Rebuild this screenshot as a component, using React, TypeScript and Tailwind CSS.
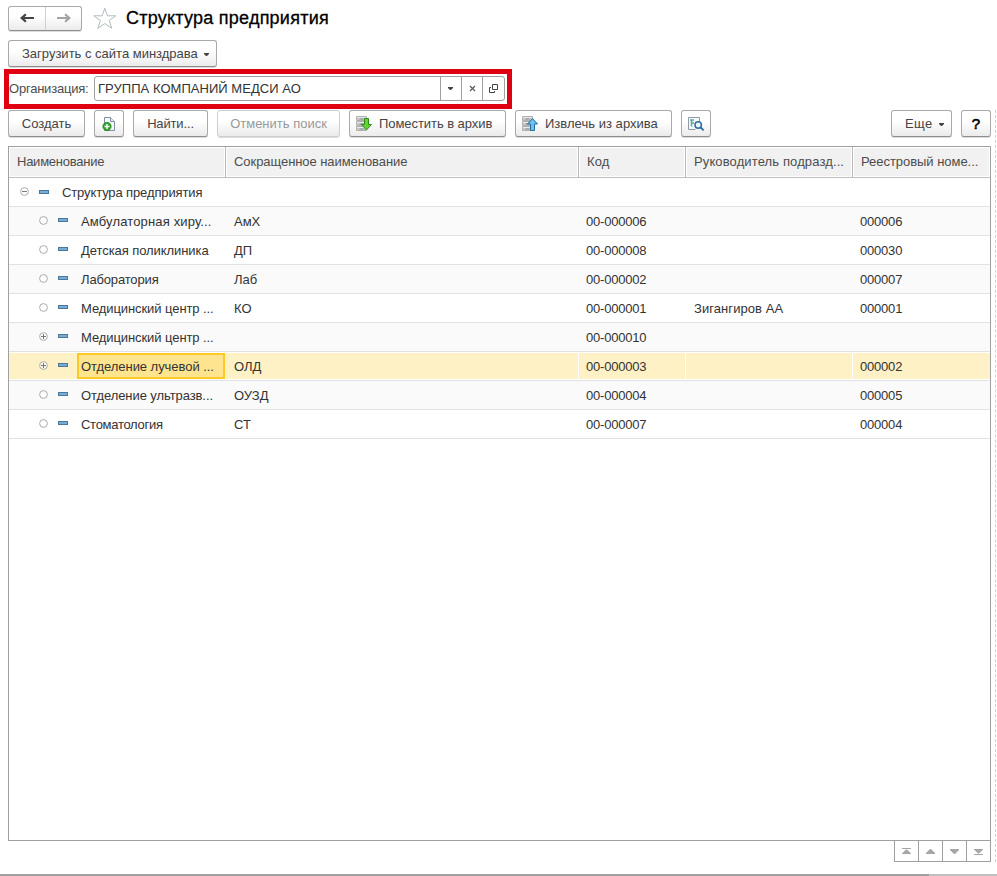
import type { ReactNode } from "react";

type Row = {
  name: string;
  nameTracking: string;
  short: string;
  code: string;
  head?: string;
  reg: string;
  expandable?: boolean;
  selected?: boolean;
};

const rows: Row[] = [
  { name: "Амбулаторная хиру...", nameTracking: "tracking-[0.15px]", short: "АмХ", code: "00-000006", reg: "000006" },
  { name: "Детская поликлиника", nameTracking: "tracking-[-0.07px]", short: "ДП", code: "00-000008", reg: "000030" },
  { name: "Лаборатория", nameTracking: "tracking-[-0.15px]", short: "Лаб", code: "00-000002", reg: "000007" },
  { name: "Медицинский центр ...", nameTracking: "tracking-[-0.08px]", short: "КО", code: "00-000001", head: "Зигангиров АА", reg: "000001" },
  { name: "Медицинский центр ...", nameTracking: "tracking-[-0.08px]", short: "", code: "00-000010", reg: "", expandable: true },
  { name: "Отделение лучевой ...", nameTracking: "tracking-[-0.05px]", short: "ОЛД", code: "00-000003", reg: "000002", expandable: true, selected: true },
  { name: "Отделение ультразв...", nameTracking: "tracking-[-0.08px]", short: "ОУЗД", code: "00-000004", reg: "000005" },
  { name: "Стоматология", nameTracking: "tracking-[-0.28px]", short: "СТ", code: "00-000007", reg: "000004" },
];

const gridCols = "grid grid-cols-[217px_353px_107px_167px_137px]";

function Button({ className, children }: { className: string; children: ReactNode }) {
  return (
    <button
      className={
        "flex h-[27px] shrink-0 items-center whitespace-nowrap rounded-[3px] border border-[#a9a9a9] border-b-[#8e8e8e] bg-linear-to-b from-white from-40% to-[#ebebeb] text-[#444] shadow-[0_1px_0_#dcdcdc] " +
        className
      }
    >
      {children}
    </button>
  );
}

function Caret({ className = "" }: { className?: string }) {
  return (
    <svg width="5" height="3" viewBox="0 0 5 3" className={"shrink-0 " + className}>
      <path d="M0 0h5v1L3 3H2L0 1z" fill="#444" />
    </svg>
  );
}

function Arrow({ color, flip }: { color: string; flip?: boolean }) {
  return (
    <svg width="14" height="10" viewBox="0 0 14 10" className={"mb-px " + (flip ? "-scale-x-100" : "")}>
      <path d="M0 5 5.2.6 6.6 2 4.6 4H14V6.1H4.6L6.6 8.1 5.2 9.5z" fill={color} />
    </svg>
  );
}

function Node({ kind }: { kind: "leaf" | "plus" | "minus" }) {
  return (
    <svg width="9" height="9" viewBox="0 0 9 9" className="shrink-0">
      <circle cx="4.5" cy="4.5" r="3.9" fill="#fff" fillOpacity=".6" stroke="#aaa" strokeWidth="1" />
      {kind !== "leaf" && <path d="M2 4.5h5" stroke="#777" />}
      {kind === "plus" && <path d="M4.5 2v5" stroke="#777" />}
    </svg>
  );
}

function Dash() {
  return <span className="h-[4px] w-[10px] shrink-0 border border-[#4a7899] bg-[#79abd4]" />;
}

function Cabinet({ children }: { children: ReactNode }) {
  return (
    <svg width="17" height="16" viewBox="0 0 17 16" className="shrink-0">
      {[0, 5, 10].map((y) => (
        <g key={y}>
          <path d={`M.5 ${y + 0.5}h10v4h-10z`} fill="#c9c9c9" stroke="#b0b0b0" />
          <path d={`M1 ${y + 1}h9v1H1z`} fill="#e9e9e9" />
          <path d={`M3.5 ${y + 3}h4`} stroke="#8c8c8c" />
        </g>
      ))}
      {children}
    </svg>
  );
}

function HeadCell({ tracking, last, children }: { tracking: string; last?: boolean; children: string }) {
  return (
    <div className={"flex border-[#b9b9b9] p-px " + (last ? "" : "border-r")}>
      <div className={"flex flex-1 items-center overflow-hidden whitespace-nowrap bg-[#f1f1f1] pl-[7px] text-[#4d4d4d] " + tracking}>
        {children}
      </div>
    </div>
  );
}

function ScrollButton({ up, bar }: { up?: boolean; bar?: boolean }) {
  return (
    <button className="flex h-full w-6 items-center justify-center border-r border-[#a0a0a0]">
      <svg width="9" height="7" viewBox="0 0 9 7" className={up ? "" : "-scale-y-100"}>
        {bar && <path d="M0 .5h9" stroke="#a6a6a6" />}
        <path d={bar ? "M4 1.5h1l4 4v.5H0v-.5z" : "M4 1h1l4 4v1H0V5z"} fill="#a6a6a6" />
      </svg>
    </button>
  );
}

export default function App() {
  return (
    <div className="flex h-[876px] w-[997px] flex-col overflow-hidden bg-white font-['Liberation_Sans',Arial,sans-serif] text-[13px] leading-4">
      <header className="flex h-[34px] items-center pl-2 pt-[3px]">
        <div className="flex h-[25px] w-[74px] rounded-[3px] border border-[#a9a9a9] border-b-[#8e8e8e] bg-linear-to-b from-white from-40% to-[#ebebeb] shadow-[0_1px_0_#dcdcdc]">
          <button className="flex w-[37px] items-center justify-center border-r border-[#cfcfcf]">
            <Arrow color="#444" />
          </button>
          <button className="flex flex-1 items-center justify-center">
            <Arrow color="#a3a3a3" flip />
          </button>
        </div>
        <svg width="24" height="23" viewBox="0 0 24 23" className="ml-[11px]">
          <path d="M11.8 1.2 14.4 8.8H22.8L16.2 13.5 18.8 21.3 11.8 16.6 4.8 21.3 7.4 13.5.8 8.8H9.2z" fill="none" stroke="#b3bbc2" />
        </svg>
        <h1 className="mb-[2px] ml-[9px] whitespace-nowrap text-[18px] leading-6 tracking-[0.24px] text-black [-webkit-text-stroke:0.3px_#000]">
          Структура предприятия
        </h1>
      </header>

      <div className="pl-2 pt-[6px]">
        <Button className="w-[209px] pl-[13px] tracking-[0px]">
          Загрузить с сайта минздрава
          <Caret className="ml-[6px] mt-[2px]" />
        </Button>
      </div>

      <div className="ml-1 mt-[2px] flex h-10 w-[508px] shrink-0 items-center border-5 border-[#df0012]">
        <label className="w-[85px] whitespace-nowrap tracking-[-0.22px] text-[#4d4d4d]">Организация:</label>
        <div className="mb-px flex h-[25px] w-[411px] rounded-[3px] border border-[#a0a0a0]">
          <div className="flex flex-1 items-center whitespace-nowrap pl-[3px] tracking-[0.04px] text-[#333]">ГРУППА КОМПАНИЙ МЕДСИ АО</div>
          <button className="flex w-[21px] items-center justify-center border-l border-[#a0a0a0] pr-px">
            <Caret className="mb-px" />
          </button>
          <button className="flex w-[21px] items-center justify-center border-l border-[#a0a0a0]">
            <svg width="7" height="7" viewBox="0 0 7 7" className="mb-px">
              <path d="m1 1 5 5M6 1 1 6" stroke="#555" strokeWidth="1.1" />
            </svg>
          </button>
          <button className="flex w-[22px] items-center justify-center border-l border-[#a0a0a0]">
            <svg width="9" height="9" viewBox="0 0 9 9" className="mb-px">
              <path d="M3.5.5h5v5h-5zM2 3.5H.5v5h5V7" fill="none" stroke="#444" />
            </svg>
          </button>
        </div>
      </div>

      <div className="flex h-[37px] shrink-0 items-start pl-2 pr-[6px] pt-[1px]">
        <Button className="w-[77px] justify-center tracking-[0px]">Создать</Button>
        <Button className="ml-[9px] w-[30px] justify-center">
          <svg width="14" height="16" viewBox="0 0 14 16">
            <path d="M2.5 1.5h6l4 4v9h-10z" fill="#f7fafc" stroke="#7e91a4" />
            <path d="M8.5 1.5v4h4" fill="#e7edf3" stroke="#7e91a4" />
            <circle cx="5" cy="10.5" r="4.2" fill="#33a12f" stroke="#22801f" strokeWidth=".6" />
            <path d="M5 8v5M2.5 10.5h5" stroke="#fff" strokeWidth="1.4" />
          </svg>
        </Button>
        <Button className="ml-[9px] w-[75px] justify-center tracking-[-0.15px]">Найти...</Button>
        <Button className="ml-[9px] w-[123px] justify-center border-[#cecece]! text-[#999]! tracking-[0px]">Отменить поиск</Button>
        <Button className="ml-[9px] w-[157px] pl-[6px] tracking-[-0.06px]">
          <Cabinet>
            <path d="M8.5 2.5h4v6h3L10.5 14 5.5 8.5h3z" fill="#69cf38" stroke="#2d8b17" />
          </Cabinet>
          <span className="ml-[6px]">Поместить в архив</span>
        </Button>
        <Button className="ml-[9px] w-[157px] pl-[6px] tracking-[0.03px]">
          <Cabinet>
            <path d="M8.5 14.5h4v-6.5h3L10.5 2.5 5.5 8h3z" fill="#71bfec" stroke="#226da4" />
          </Cabinet>
          <span className="ml-[6px]">Извлечь из архива</span>
        </Button>
        <Button className="ml-[9px] w-[30px] justify-center">
          <svg width="17" height="16" viewBox="0 0 17 16" className="ml-px">
            <path d="M11.5 5V1.5H.5v12h7" fill="#f8fafb" stroke="#8d9ba8" />
            <path d="M2 4h4M3.5 4v6.5M3.5 7H6" fill="none" stroke="#58aa90" strokeWidth="1.5" />
            <circle cx="10.2" cy="9" r="3.2" fill="#eef6fc" stroke="#2a6fa5" strokeWidth="1.5" />
            <path d="m12.6 11.4 3 3" stroke="#2a6fa5" strokeWidth="2" />
          </svg>
        </Button>
        <Button className="ml-auto w-[61px] pl-[13px] tracking-[0.4px]">
          Еще
          <Caret className="ml-[6px] mt-[2px]" />
        </Button>
        <Button className="ml-[9px] w-[30px] justify-center text-[15px] text-black! [-webkit-text-stroke:0.6px_#000]">?</Button>
      </div>

      <div className="flex h-[716px] shrink-0">
        <main className="ml-2 flex w-[983px] flex-col items-end">
          <div className="h-[695px] w-full border border-[#a0a0a0]">
            <div className={gridCols + " h-[31px] border-b border-[#bfbfbf]"}>
              <HeadCell tracking="tracking-[-0.25px]">Наименование</HeadCell>
              <HeadCell tracking="tracking-[-0.06px]">Сокращенное наименование</HeadCell>
              <HeadCell tracking="tracking-[0.1px]">Код</HeadCell>
              <HeadCell tracking="tracking-[0.12px]">Руководитель подразд...</HeadCell>
              <HeadCell tracking="tracking-[-0.04px]" last>Реестровый номе...</HeadCell>
            </div>
            <div className="flex h-[29px] items-center border-b border-[#e2e2e4] pl-[11px] text-[#333]">
              <span className="mb-px flex"><Node kind="minus" /></span>
              <span className="mb-px ml-[10px] flex"><Dash /></span>
              <span className="ml-[13px] pt-[2px] tracking-[-0.12px]">Структура предприятия</span>
            </div>
            {rows.map((r, i) => (
              <div
                key={r.code}
                className={
                  gridCols +
                  " h-[29px] whitespace-nowrap border-b border-[#e2e2e4] text-[#333] " +
                  (r.selected ? "bg-[#fef1c5] shadow-[inset_0_1px_0_#fff,inset_0_-1px_0_#fff]" : i % 2 ? "bg-white" : "bg-[#fafafa]")
                }
              >
                <div className="flex items-center pl-[30px]">
                  <span className="mb-[2px] flex"><Node kind={r.expandable ? "plus" : "leaf"} /></span>
                  <span className="mb-[3px] ml-[10px] flex"><Dash /></span>
                  <span
                    className={
                      "ml-[9px] flex h-[26px] w-[148px] items-center border-2 pl-[2px] pt-[2px] " +
                      r.nameTracking +
                      (r.selected ? " border-[#fdc924] bg-[#ffe48f]" : " border-transparent")
                    }
                  >
                    {r.name}
                  </span>
                </div>
                <div className={"flex items-center pl-2 pt-[2px] " + (r.selected ? "border-r border-white" : "")}>{r.short}</div>
                <div className={"flex items-center pl-[7px] pt-[2px] tracking-[-0.2px] " + (r.selected ? "border-r border-white" : "")}>{r.code}</div>
                <div className={"flex items-center pl-2 pt-[2px] tracking-[0.07px] " + (r.selected ? "border-r border-white" : "")}>{r.head}</div>
                <div className="flex items-center pl-[7px] pt-[2px] tracking-[-0.2px]">{r.reg}</div>
              </div>
            ))}
          </div>
          <div className="flex h-[21px] border-b border-l border-[#a0a0a0]">
            <ScrollButton up bar />
            <ScrollButton up />
            <ScrollButton />
            <ScrollButton bar />
          </div>
        </main>
        <div className="-mt-9 ml-1 w-px border-l border-dashed border-[#cfcfcf]" />
      </div>
      <footer className="mt-auto flex h-[2px] shrink-0 bg-[#c0c0c0]">
        <div className="w-[929px] bg-[#a0a0a0]" />
      </footer>
    </div>
  );
}
